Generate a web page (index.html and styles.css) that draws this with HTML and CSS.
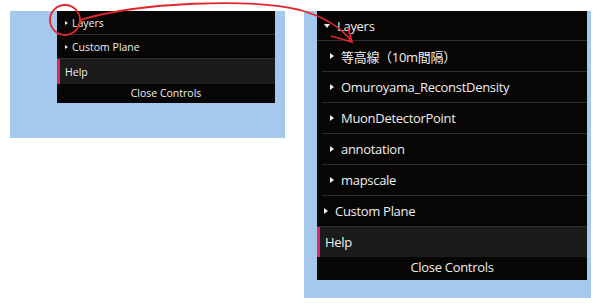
FILE: index.html
```html
<!DOCTYPE html>
<html lang="ja">
<head>
    <meta charset="UTF-8">
    <title>Layers - Controls</title>
    <link rel="stylesheet" href="styles.css">
</head>
<body>
    <div class="page">
        <!-- before: Layers folder closed -->
        <div class="shot shot-small">
            <div class="gui">
                <div class="row folder">Layers</div>
                <div class="row folder">Custom Plane</div>
                <div class="row help">Help</div>
                <div class="close">Close Controls</div>
            </div>
        </div>

        <!-- after: Layers folder opened -->
        <div class="shot shot-large">
            <div class="gui">
                <div class="row folder open">Layers</div>
                <div class="children">
                    <div class="row folder">等高線（10m間隔）</div>
                    <div class="row folder">Omuroyama_ReconstDensity</div>
                    <div class="row folder">MuonDetectorPoint</div>
                    <div class="row folder">annotation</div>
                    <div class="row folder">mapscale</div>
                </div>
                <div class="row folder">Custom Plane</div>
                <div class="row help">Help</div>
                <div class="close">Close Controls</div>
            </div>
        </div>

        <svg class="annot" width="600" height="60" viewBox="0 0 600 60">
            <circle cx="65" cy="20" r="15" fill="none" stroke="#e3262b" stroke-width="1.8"/>
            <path d="M80 20 C140 2 250 -2 300 10 C325 17 342 28 352 42" fill="none" stroke="#e3262b" stroke-width="1.8"/>
            <path d="M331 36 L352 42 L348 28" fill="none" stroke="#e3262b" stroke-width="1.8"/>
        </svg>
    </div>
</body>
</html>
```

FILE: styles.css
```css
body {
    margin: 0;
    background: #fff;
    font-family: "Open Sans", "Noto Sans CJK JP", sans-serif;
}

.page {
    position: relative;
    display: flex;
    align-items: flex-start;
    gap: 19px;
    padding: 11px 0 0 10px;
}

.shot {
    background: #a5c9ec;
    box-sizing: border-box;
}

.shot-small {
    width: 275px;
    height: 127px;
    padding-left: 47px;
}

.shot-large {
    width: 287px;
    height: 287px;
    padding-left: 13px;
}

.gui {
    background: #080505;
    color: #eee;
}

.shot-small .gui {
    width: 218px;
    font-size: 10.5px;
}

.shot-large .gui {
    width: 270px;
    font-size: 13px;
    letter-spacing: -0.3px;
}

.row {
    display: flex;
    align-items: center;
    border-bottom: 1px solid #2e2e2e;
    white-space: nowrap;
}

.folder::before {
    content: "";
    border-left: 3px solid #eee;
    border-top: 2.5px solid transparent;
    border-bottom: 2.5px solid transparent;
}

.shot-small .row {
    height: 23px;
    padding-left: 8px;
}

.shot-small .folder::before {
    margin-right: 4px;
}

.shot-large .row {
    height: 30px;
    padding-left: 7px;
}

.shot-large .folder::before {
    border-left-width: 4px;
    border-top-width: 3px;
    border-bottom-width: 3px;
    margin-right: 7px;
}

.shot-large .folder.open {
    height: 29px;
}

.shot-large .folder.open::before {
    border-left: 3px solid transparent;
    border-right: 3px solid transparent;
    border-top: 4px solid #eee;
    border-bottom: 0;
}

.children {
    margin-left: 5px;
}

.shot-large .children .row {
    padding-left: 8px;
    background: #080505;
}

.help {
    background: #1b1b1b;
    border-left: 3px solid #e0246a;
    border-bottom: 0;
}

.shot-small .row.help {
    padding-left: 5px;
    height: 25px;
}

.shot-large .row.help {
    padding-left: 5px;
}

.close {
    text-align: center;
}

.shot-small .close {
    height: 19px;
    line-height: 18px;
}

.shot-large .close {
    height: 23px;
    line-height: 21px;
}

.annot {
    position: absolute;
    left: 0;
    top: 0;
    pointer-events: none;
}
```
